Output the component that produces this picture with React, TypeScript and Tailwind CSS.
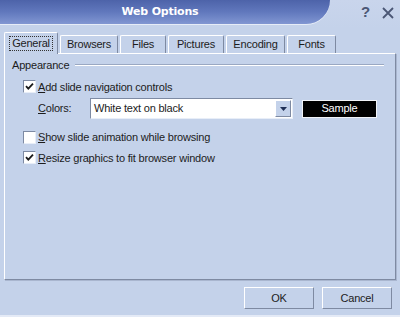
import React from 'react';

const TABS = ['General', 'Browsers', 'Files', 'Pictures', 'Encoding', 'Fonts'];
const TAB_WIDTHS = ['w-[54px]', 'w-[58px]', 'w-[46px]', 'w-[56px]', 'w-[59px]', 'w-[49px]'];

function Check({ checked }: { checked: boolean }) {
  return (
    <span className="flex h-[13px] w-[13px] shrink-0 items-center justify-center border border-t-[#7d8aa3] border-l-[#7d8aa3] border-r-[#e8eef8] border-b-[#e8eef8] bg-white">
      {checked && (
        <svg width="9" height="9" viewBox="0 0 9 9" aria-hidden>
          <path d="M1 4.2 L3.3 6.6 L8 1.6" fill="none" stroke="#1a1a1a" strokeWidth="1.8" />
        </svg>
      )}
    </span>
  );
}

function CheckRow({ checked, mnemonic, rest }: { checked: boolean; mnemonic: string; rest: string }) {
  return (
    <div className="flex items-center">
      <Check checked={checked} />
      <span className="ml-[2px] text-[#1c1c1c]">
        <span className="underline underline-offset-1">{mnemonic}</span>
        {rest}
      </span>
    </div>
  );
}

export default function App() {
  return (
    <div className="flex h-[317px] w-[400px] flex-col overflow-hidden bg-[#c4d2ea] font-['Liberation_Sans',sans-serif] text-[11px] tracking-[-0.2px] text-[#1c1c1c]">
      {/* title bar */}
      <div className="flex h-[28px] bg-gradient-to-b from-[#c9d5ec] to-[#c4d2ea]">
        <div className="flex h-[24px] w-[330px] items-center justify-center rounded-br-[34px] bg-gradient-to-b from-[#4d63a9] via-[#6178bd] to-[#8196d2] pr-[10px] shadow-[0_1px_0_#e6ecf7]">
          <span className="font-['DejaVu_Sans',sans-serif] text-[11px] font-bold tracking-[-0.2px] text-white">
            Web Options
          </span>
        </div>
        <div className="ml-auto flex items-center gap-[12px] pb-[3px] pr-[6px] text-[15px] text-[#4b5775]">
          <span className="font-bold">?</span>
          <svg width="12" height="12" viewBox="0 0 12 12" aria-hidden>
            <path d="M1 1 L11 11 M11 1 L1 11" stroke="#4b5775" strokeWidth="1.8" />
          </svg>
        </div>
      </div>

      {/* tabs */}
      <div className="relative z-10 flex h-[25px] items-end pl-[4px]">
        {TABS.map((t, i) =>
          i === 0 ? (
            <div
              key={t}
              className={`${TAB_WIDTHS[i]} -mb-[1px] flex h-[22px] items-center justify-center rounded-t-[2px] border border-b-0 border-l-white border-t-white border-r-[#7e8aa2] bg-[#c4d2ea]`}
            >
              <span className="border border-dotted border-[#333] px-[2px] leading-[13px]">{t}</span>
            </div>
          ) : (
            <div
              key={t}
              className={`${TAB_WIDTHS[i]} ml-[2px] flex h-[18px] items-center justify-center rounded-t-[2px] border border-b-0 border-l-white border-t-white border-r-[#7e8aa2] bg-[#c4d2ea]`}
            >
              {t}
            </div>
          ),
        )}
      </div>

      {/* panel */}
      <div className="mx-[4px] flex h-[227px] flex-col border border-b-[#7e8aa2] border-l-white border-r-[#7e8aa2] border-t-white px-[7px] pt-[3px] shadow-[1px_1px_0_#a9b6cf]">
        <div className="flex items-center gap-[6px]">
          <span>Appearance</span>
          <div className="mr-[4px] h-[2px] flex-1 border-b border-t border-b-white border-t-[#9aa8c2]" />
        </div>

        <div className="ml-[11px] mt-[5px] flex flex-col">
          <CheckRow checked mnemonic="A" rest="dd slide navigation controls" />

          <div className="mt-[3px] flex items-center pl-[15px]">
            <span className="w-[52px]">
              <span className="underline underline-offset-1">C</span>olors:
            </span>
            <div className="flex h-[21px] w-[203px] items-center border border-b-[#e8eef8] border-l-[#7d8aa3] border-r-[#e8eef8] border-t-[#7d8aa3] bg-white pl-[3px]">
              <span className="flex-1">White text on black</span>
              <div className="mr-[1px] flex h-[17px] w-[16px] items-center justify-center border border-b-[#7e8aa2] border-l-white border-r-[#7e8aa2] border-t-white bg-[#c4d2ea]">
                <svg width="7" height="4" viewBox="0 0 7 4" aria-hidden>
                  <path d="M0 0 H7 L3.5 4 Z" fill="#1f2f55" />
                </svg>
              </div>
            </div>
            <div className="ml-[9px] flex h-[18px] w-[75px] items-center justify-center border border-[#f2f4f8] bg-black text-white">
              Sample
            </div>
          </div>

          <div className="mt-[10px]">
            <CheckRow checked={false} mnemonic="S" rest="how slide animation while browsing" />
          </div>
          <div className="mt-[4px]">
            <CheckRow checked mnemonic="R" rest="esize graphics to fit browser window" />
          </div>
        </div>
      </div>

      {/* footer */}
      <div className="flex justify-end gap-[8px] pr-[8px] pt-[7px]">
        {['OK', 'Cancel'].map((b) => (
          <div
            key={b}
            className="flex h-[22px] w-[70px] items-center justify-center border border-b-[#7e8aa2] border-l-white border-r-[#7e8aa2] border-t-white bg-[#c4d2ea]"
          >
            {b}
          </div>
        ))}
      </div>
      <div className="mt-auto h-[2px] bg-[#e4eaf6]" />
    </div>
  );
}
